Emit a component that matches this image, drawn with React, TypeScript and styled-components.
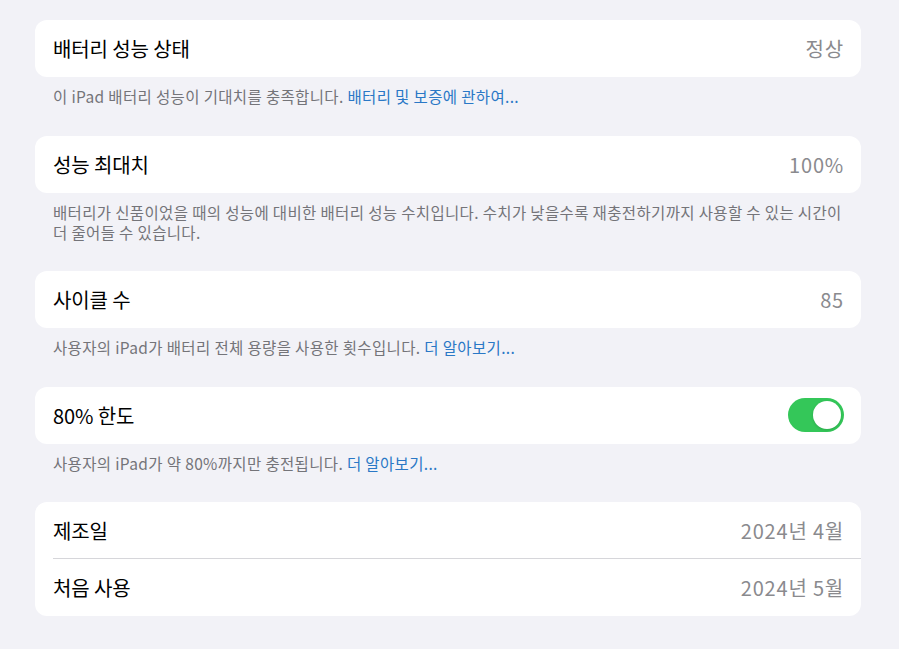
import styled, { createGlobalStyle } from "styled-components";

const GlobalStyle = createGlobalStyle`
    body {
        margin: 0;
        background: #f2f2f7;
        font-family: "Noto Sans CJK KR", "Noto Sans", sans-serif;
        -webkit-font-smoothing: antialiased;
    }
`;

const Page = styled.div`
    width: 826px;
    padding: 20px 38px 0 35px;
`;

const Section = styled.section`
    margin-bottom: 29.5px;
`;

const Card = styled.div`
    background: #ffffff;
    border-radius: 12px;
    overflow: hidden;
`;

const Row = styled.div<{ $divider?: boolean }>`
    position: relative;
    display: flex;
    align-items: center;
    justify-content: space-between;
    height: 57px;
    padding: 0 17px 0 18px;
    box-sizing: border-box;
    ${({ $divider }) =>
        $divider &&
        `
        &::after {
            content: "";
            position: absolute;
            left: 18px;
            right: 0;
            bottom: 0;
            height: 1px;
            background: #d6d6da;
        }
    `}
`;

const Label = styled.span`
    font-size: 20px;
    color: #000000;
    letter-spacing: -0.1px;
`;

const Value = styled.span`
    font-size: 20px;
    color: #8a8a8e;
    letter-spacing: 0.8px;
`;

const Caption = styled.p`
    margin: 9px 0 0;
    padding: 0 18px;
    font-size: 15.5px;
    line-height: 20px;
    color: #747479;
    letter-spacing: 0.35px;
    white-space: nowrap;
`;

const LinkText = styled.span`
    color: #2a78c6;
`;

const Toggle = styled.div<{ $on: boolean }>`
    position: relative;
    width: 56px;
    height: 34px;
    border-radius: 17px;
    background: ${({ $on }) => ($on ? "#34c759" : "#e5e5ea")};
    &::after {
        content: "";
        position: absolute;
        top: 3px;
        left: ${({ $on }) => ($on ? "25px" : "3px")};
        width: 28px;
        height: 28px;
        border-radius: 50%;
        background: #ffffff;
        box-shadow: 0 1px 3px rgba(0, 0, 0, 0.15);
    }
`;

const App = () => {
    return (
        <>
            <GlobalStyle />
            <Page>
                <Section>
                    <Card>
                        <Row>
                            <Label>배터리 성능 상태</Label>
                            <Value>정상</Value>
                        </Row>
                    </Card>
                    <Caption>
                        이 iPad 배터리 성능이 기대치를 충족합니다.{" "}
                        <LinkText>배터리 및 보증에 관하여...</LinkText>
                    </Caption>
                </Section>
                <Section>
                    <Card>
                        <Row>
                            <Label>성능 최대치</Label>
                            <Value>100%</Value>
                        </Row>
                    </Card>
                    <Caption>
                        배터리가 신품이었을 때의 성능에 대비한 배터리 성능
                        수치입니다. 수치가 낮을수록 재충전하기까지 사용할 수
                        있는 시간이
                        <br />더 줄어들 수 있습니다.
                    </Caption>
                </Section>
                <Section>
                    <Card>
                        <Row>
                            <Label>사이클 수</Label>
                            <Value>85</Value>
                        </Row>
                    </Card>
                    <Caption>
                        사용자의 iPad가 배터리 전체 용량을 사용한 횟수입니다.{" "}
                        <LinkText>더 알아보기...</LinkText>
                    </Caption>
                </Section>
                <Section>
                    <Card>
                        <Row>
                            <Label>80% 한도</Label>
                            <Toggle $on />
                        </Row>
                    </Card>
                    <Caption>
                        사용자의 iPad가 약 80%까지만 충전됩니다.{" "}
                        <LinkText>더 알아보기...</LinkText>
                    </Caption>
                </Section>
                <Section>
                    <Card>
                        <Row $divider>
                            <Label>제조일</Label>
                            <Value>2024년 4월</Value>
                        </Row>
                        <Row>
                            <Label>처음 사용</Label>
                            <Value>2024년 5월</Value>
                        </Row>
                    </Card>
                </Section>
            </Page>
        </>
    );
};

export default App;
